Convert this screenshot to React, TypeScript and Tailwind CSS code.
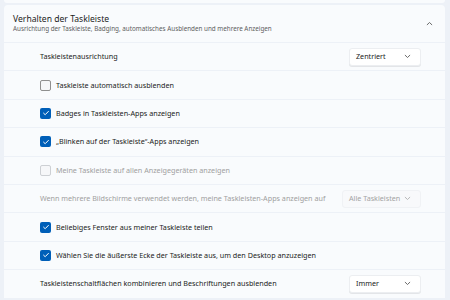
import React from 'react';

const font = { fontFamily: '"Noto Sans", "Open Sans", sans-serif' };

const Check = ({ checked, disabled }: { checked?: boolean; disabled?: boolean }) =>
  checked ? (
    <span className="flex h-[11px] w-[11px] shrink-0 items-center justify-center rounded-[2px] bg-[#005fb8]">
      <svg width="8" height="8" viewBox="0 0 8 8" fill="none">
        <path d="M1.6 4.2 L3.2 5.7 L6.4 2.4" stroke="white" strokeWidth="1" strokeLinecap="round" strokeLinejoin="round" />
      </svg>
    </span>
  ) : (
    <span
      className={`h-[11px] w-[11px] shrink-0 rounded-[2px] border ${
        disabled ? 'border-[#cdd0d4] bg-[#f6f7f9]' : 'border-[#8f8f8f] bg-[#f5f6f8]'
      }`}
    />
  );

const Chevron = ({ up, light }: { up?: boolean; light?: boolean }) => (
  <svg width="7" height="5" viewBox="0 0 7 5" fill="none" className={up ? 'rotate-180' : ''}>
    <path d="M1.2 1.3 L3.5 3.5 L5.8 1.3" stroke={light ? '#b0b0b0' : '#5a5a5a'} strokeWidth="0.9" strokeLinecap="round" strokeLinejoin="round" />
  </svg>
);

const Select = ({ label, width, disabled }: { label: string; width: string; disabled?: boolean }) => (
  <div
    className={`flex h-[18px] shrink-0 items-center justify-between rounded-[3px] border pl-[6px] pr-[9px] ${width} ${
      disabled ? 'border-[#f0f2f5] bg-[#f8f9fb] text-[#a3a3a3]' : 'border-[#eceef1] bg-white text-[#1b1b1b] shadow-[0_1px_0_#e3e5e8]'
    }`}
  >
    <span className="text-[7.2px]">{label}</span>
    <Chevron light={disabled} />
  </div>
);

const Row = ({ children }: { children: React.ReactNode }) => (
  <div className="flex h-[27.4px] items-center bg-[#f9fbfd] pl-[36px] pr-[24px]">{children}</div>
);

const CheckRow = ({ label, checked, disabled }: { label: string; checked?: boolean; disabled?: boolean }) => (
  <Row>
    <Check checked={checked} disabled={disabled} />
    <span className={`ml-[5px] text-[7.2px] ${disabled ? 'text-[#a0a0a0]' : 'text-[#1b1b1b]'}`}>{label}</span>
  </Row>
);

export default function App() {
  return (
    <div className="h-[300px] w-[450px] overflow-hidden bg-[#edf1f7]" style={font}>
      <div className="mr-[5px] ml-[4px] h-[3px] rounded-b-[4px] bg-[#f9fbfd]" />
      <div className="mt-[2px] mr-[5px] ml-[4px] flex flex-col gap-[1px]">
        <div className="flex h-[37px] items-center justify-between rounded-t-[4px] bg-[#f9fbfd] pl-[9px] pr-[12px]">
          <div className="flex flex-col leading-none">
            <span className="text-[8.6px] text-[#1b1b1b]">Verhalten der Taskleiste</span>
            <span className="mt-[2px] text-[6.3px] text-[#5d5d5d]">
              Ausrichtung der Taskleiste, Badging, automatisches Ausblenden und mehrere Anzeigen
            </span>
          </div>
          <Chevron up />
        </div>
        <Row>
          <span className="flex-1 text-[7.2px] text-[#1b1b1b]">Taskleistenausrichtung</span>
          <Select label="Zentriert" width="w-[72px]" />
        </Row>
        <CheckRow label="Taskleiste automatisch ausblenden" />
        <CheckRow label="Badges in Taskleisten-Apps anzeigen" checked />
        <CheckRow label="„Blinken auf der Taskleiste“-Apps anzeigen" checked />
        <CheckRow label="Meine Taskleiste auf allen Anzeigegeräten anzeigen" disabled />
        <Row>
          <span className="flex-1 text-[7.2px] text-[#a0a0a0]">
            Wenn mehrere Bildschirme verwendet werden, meine Taskleisten-Apps anzeigen auf
          </span>
          <Select label="Alle Taskleisten" width="w-[79px]" disabled />
        </Row>
        <CheckRow label="Beliebiges Fenster aus meiner Taskleiste teilen" checked />
        <CheckRow label="Wählen Sie die äußerste Ecke der Taskleiste aus, um den Desktop anzuzeigen" checked />
        <Row>
          <span className="flex-1 text-[7.2px] text-[#1b1b1b]">Taskleistenschaltflächen kombinieren und Beschriftungen ausblenden</span>
          <Select label="Immer" width="w-[72px]" />
        </Row>
      </div>
    </div>
  );
}
